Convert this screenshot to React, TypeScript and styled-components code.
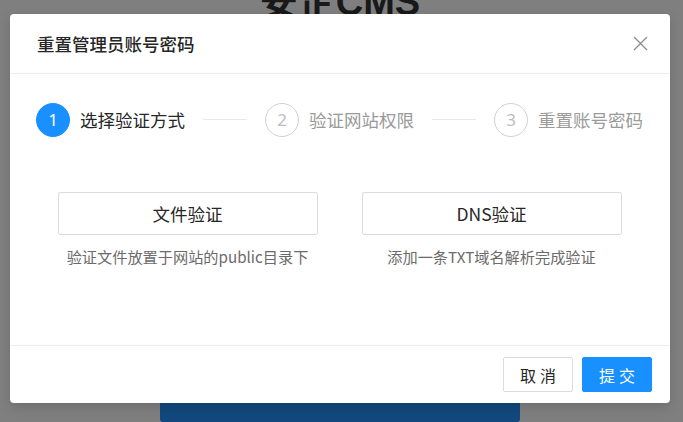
import React from "react";
import styled, { createGlobalStyle } from "styled-components";

const Global = createGlobalStyle`
  html, body { margin: 0; padding: 0; background: #fff; }
  body { font-family: "Noto Sans CJK SC", "Noto Sans", "Liberation Sans", sans-serif; }
  * { box-sizing: border-box; }
`;

const Page = styled.div`
  position: relative;
  width: 683px;
  height: 422px;
  overflow: hidden;
  background: #fff;
  display: flex;
  flex-direction: column;
  align-items: center;
`;

const BgTitle = styled.h1`
  margin: -17px 3px 0 0;
  font-family: "Liberation Sans", "Noto Sans CJK SC", sans-serif;
  font-size: 38px;
  line-height: 38px;
  font-weight: 700;
  color: #333;
  letter-spacing: 0;
`;

const BgButton = styled.div`
  margin: 365px 3px 0 0;
  width: 360px;
  height: 40px;
  border-radius: 3px;
  background: #2590fb;
`;

const Overlay = styled.div`
  position: absolute;
  inset: 0;
  background: rgba(0, 0, 0, 0.5);
  display: flex;
  align-items: flex-start;
  padding: 14px 0 0 10px;
`;

const Modal = styled.div`
  width: 660px;
  height: 389px;
  background: #fff;
  border-radius: 4px;
  display: flex;
  flex-direction: column;
  box-shadow: 0 4px 12px rgba(0, 0, 0, 0.15);
`;

const Header = styled.div`
  height: 60px;
  flex: none;
  display: flex;
  align-items: center;
  justify-content: space-between;
  padding: 0 22px 0 27px;
  border-bottom: 1px solid #ececec;
`;

const Title = styled.div`
  font-size: 17.5px;
  color: #262626;
  font-weight: 500;
  letter-spacing: 0;
`;

const Close = styled.button`
  border: 0;
  background: transparent;
  padding: 0;
  width: 16px;
  height: 16px;
  display: flex;
  align-items: center;
  justify-content: center;
  color: #8c8c8c;
`;

const Body = styled.div`
  flex: 1;
  padding: 28px 27px 0 26px;
  display: flex;
  flex-direction: column;
`;

const Steps = styled.div`
  display: flex;
  align-items: center;
  height: 35px;
`;

const Step = styled.div<{ $last?: boolean }>`
  display: flex;
  align-items: center;
  flex: ${(p) => (p.$last ? "none" : "1")};
`;

const StepIcon = styled.div<{ $active?: boolean }>`
  width: 34px;
  height: 34px;
  border-radius: 50%;
  flex: none;
  display: flex;
  align-items: center;
  justify-content: center;
  font-family: "Noto Sans", "Liberation Sans", sans-serif;
  font-size: 17px;
  background: ${(p) => (p.$active ? "#1890ff" : "#fff")};
  border: 1px solid ${(p) => (p.$active ? "#1890ff" : "#d0d0d0")};
  color: ${(p) => (p.$active ? "#fff" : "#bdbdbd")};
`;

const StepTitle = styled.div<{ $active?: boolean }>`
  margin-left: 10px;
  font-size: 17.5px;
  white-space: nowrap;
  color: ${(p) => (p.$active ? "#262626" : "#9a9a9a")};
`;

const StepLine = styled.div`
  flex: 1;
  height: 1px;
  background: #e8e8e8;
  margin: 0 18px;
`;

const Options = styled.div`
  margin-top: 55px;
  display: grid;
  grid-template-columns: 260px 260px;
  column-gap: 44px;
  justify-content: center;
`;

const Option = styled.div`
  display: flex;
  flex-direction: column;
  align-items: center;
`;

const OptionButton = styled.button`
  width: 260px;
  height: 43px;
  border: 1px solid #dcdcdc;
  border-radius: 2px;
  background: #fff;
  font-family: "Noto Sans CJK SC", "Noto Sans", sans-serif;
  font-size: 17.5px;
  color: #262626;
  padding: 0;
`;

const OptionDesc = styled.div`
  margin-top: 10px;
  font-size: 15.2px;
  color: #6b6b6b;
  white-space: nowrap;
`;

const Footer = styled.div`
  flex: none;
  height: 58px;
  border-top: 1px solid #ececec;
  display: flex;
  align-items: center;
  justify-content: flex-end;
  gap: 9px;
  padding: 0 18px 0 0;
`;

const FooterButton = styled.button<{ $primary?: boolean }>`
  width: 70px;
  height: 35px;
  border-radius: 2px;
  font-family: "Noto Sans CJK SC", "Noto Sans", sans-serif;
  font-size: 16px;
  letter-spacing: 4px;
  text-indent: 4px;
  padding: 0;
  border: 1px solid ${(p) => (p.$primary ? "#1890ff" : "#dcdcdc")};
  background: ${(p) => (p.$primary ? "#1890ff" : "#fff")};
  color: ${(p) => (p.$primary ? "#fff" : "#262626")};
`;

const steps = ["选择验证方式", "验证网站权限", "重置账号密码"];

export default function App() {
  return (
    <>
      <Global />
      <Page>
        <BgTitle>安企CMS</BgTitle>
        <BgButton />
        <Overlay>
          <Modal>
            <Header>
              <Title>重置管理员账号密码</Title>
              <Close aria-label="关闭">
                <svg width="15" height="15" viewBox="0 0 15 15">
                  <path d="M1 1 L14 14 M14 1 L1 14" stroke="currentColor" strokeWidth="1.3" fill="none" />
                </svg>
              </Close>
            </Header>
            <Body>
              <Steps>
                {steps.map((s, i) => {
                  const last = i === steps.length - 1;
                  return (
                    <Step key={s} $last={last}>
                      <StepIcon $active={i === 0}>{i + 1}</StepIcon>
                      <StepTitle $active={i === 0}>{s}</StepTitle>
                      {!last && <StepLine />}
                    </Step>
                  );
                })}
              </Steps>
              <Options>
                <Option>
                  <OptionButton>文件验证</OptionButton>
                  <OptionDesc>验证文件放置于网站的public目录下</OptionDesc>
                </Option>
                <Option>
                  <OptionButton>DNS验证</OptionButton>
                  <OptionDesc>添加一条TXT域名解析完成验证</OptionDesc>
                </Option>
              </Options>
            </Body>
            <Footer>
              <FooterButton>取消</FooterButton>
              <FooterButton $primary>提交</FooterButton>
            </Footer>
          </Modal>
        </Overlay>
      </Page>
    </>
  );
}
